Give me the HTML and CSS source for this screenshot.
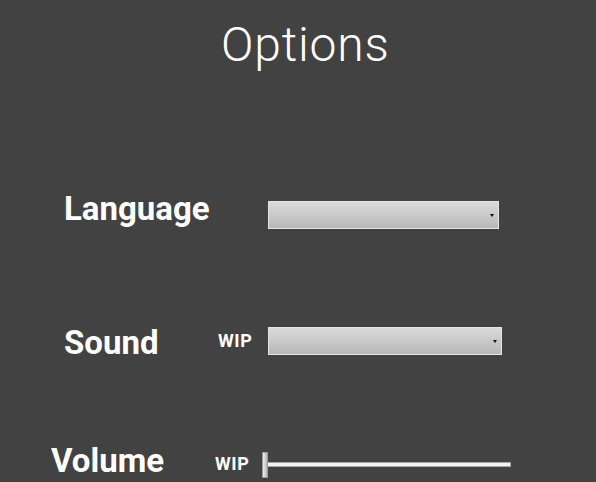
FILE: index.html
```html
<!DOCTYPE html>
<html>
<head>
<meta charset="utf-8">
<link rel="stylesheet" href="styles.css">
</head>
<body>
<div class="page">
  <h1 class="title">Options</h1>
  <div class="row row-lang">
    <div class="label">Language</div>
    <div class="select sel-lang"><span class="arrow"></span></div>
  </div>
  <div class="row row-sound">
    <div class="label">Sound</div>
    <div class="wip">WIP</div>
    <div class="select sel-sound"><span class="arrow"></span></div>
  </div>
  <div class="row row-vol">
    <div class="label">Volume</div>
    <div class="wip wip-vol">WIP</div>
    <div class="slider">
      <div class="thumb"></div>
      <div class="track"></div>
    </div>
  </div>
</div>
</body>
</html>
```
FILE: styles.css
```css
html, body {
  margin: 0;
  padding: 0;
  background: #424242;
  width: 596px;
  height: 482px;
  overflow: hidden;
}
.page {
  font-family: Roboto, "Liberation Sans", sans-serif;
  color: #ffffff;
}
.title {
  margin: 0;
  padding: 16px 0 0 221px;
  font-weight: 300;
  font-size: 48px;
  line-height: 58px;
  letter-spacing: 0.8px;
}
.row {
  display: flex;
  align-items: center;
}
.label {
  font-weight: 700;
  font-size: 33px;
  line-height: 40px;
}
.row-lang {
  margin-top: 127px;
  padding-left: 64px;
}
.row-lang .label { width: 204px; margin-top: -12px; }
.select {
  height: 26px;
  border: 1px solid #e4e4e4;
  background: linear-gradient(#dadada, #b8b8b8);
  position: relative;
}
.sel-lang { width: 229px; }
.sel-sound { width: 232px; }
.arrow {
  position: absolute;
  right: 4px;
  top: 12px;
  width: 0;
  height: 0;
  border-left: 2.5px solid transparent;
  border-right: 2.5px solid transparent;
  border-top: 3px solid #111;
}
.row-sound {
  margin-top: 89px;
  padding-left: 64px;
}
.row-sound .label { width: 154px; margin-top: 5px; }
.wip {
  font-weight: 700;
  font-size: 18px;
  line-height: 20px;
  letter-spacing: 0.6px;
  width: 50px;
}
.row-vol {
  margin-top: 78px;
  padding-left: 51px;
}
.row-vol .label { width: 164px; }
.wip-vol { width: 47px; margin-top: 6px; }
.slider {
  display: flex;
  align-items: center;
  margin-top: 7px;
}
.thumb {
  width: 4px;
  height: 24px;
  background: linear-gradient(90deg, #f0f0f0, #b8b8b8);
  border: 1px solid #9a9a9a;
}
.track {
  width: 242px;
  height: 3px;
  background: #f2f2f2;
  border: 1px solid #a8a8a8;
  border-left: none;
}
```
